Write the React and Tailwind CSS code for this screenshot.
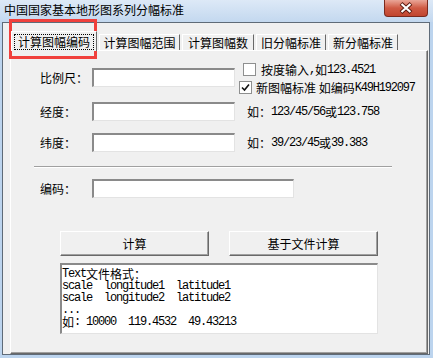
import React from 'react'

// ascii run in a SimSun-like half-width mono
function A({ children }) {
  return <span className="font-['Liberation_Mono',monospace] text-[12px] tracking-[-1.2px] leading-[12px]">{children}</span>
}

function Input({ w }) {
  return (
    <div
      className="h-[19px] bg-white border-t-2 border-l-2 border-t-[#8a8a8a] border-l-[#8a8a8a] border-r border-b border-r-[#e3e3e3] border-b-[#e3e3e3]"
      style={{ width: w }}
    />
  )
}

function CheckBox({ checked }) {
  return (
    <div className="w-[13px] h-[13px] bg-white border border-[#8e8f8f] flex items-center justify-center">
      {checked && (
        <svg width="9" height="9" viewBox="0 0 9 9">
          <path d="M1 4.5 L3.5 7 L8 1.5" fill="none" stroke="#111" strokeWidth="1.6" />
        </svg>
      )}
    </div>
  )
}

function Tab({ label, w, selected }) {
  if (selected) {
    return (
      <div className="relative z-10 -mb-[1px] h-[20px] w-[86px] bg-[#f0f0f0] border-t border-l border-white border-r border-r-[#696969] flex items-center justify-center">
        <div className="h-[16px] px-[3px] border border-dotted border-black flex items-center leading-[12px]">{label}</div>
      </div>
    )
  }
  return (
    <div
      className="h-[16px] bg-[#f0f0f0] border-t border-l border-white border-r border-r-[#696969] flex items-center justify-center leading-[12px]"
      style={{ width: w }}
    >
      {label}
    </div>
  )
}

function Button({ children }) {
  return (
    <div className="w-[149px] h-[25px] bg-[#f0f0f0] border-t border-l border-white border-r border-b border-r-[#696969] border-b-[#696969] shadow-[inset_-1px_-1px_0_#a0a0a0] flex items-center justify-center leading-[12px]">
      {children}
    </div>
  )
}

function Line({ children }) {
  return <div className="flex items-center h-[12px] leading-[12px] whitespace-pre">{children}</div>
}

export default function App() {
  return (
    <div className="relative w-[433px] h-[358px] overflow-hidden bg-[#bcd4ee] flex flex-col text-[12px] text-black font-['Noto_Sans_CJK_SC',sans-serif]">
      {/* title bar */}
      <div className="h-[22px] flex items-start bg-gradient-to-b from-[#dde9f7] to-[#c3d8ef]">
        <div className="pl-[4px] pt-[4px] leading-[12px]">中国国家基本地形图系列分幅标准</div>
        <div className="ml-auto mr-[5px] w-[44px] h-[17px] rounded-b-[4px] border border-t-0 border-[#7a2a1e] bg-gradient-to-b from-[#e9a597] via-[#cf5a44] to-[#c1452f] flex items-center justify-center">
          <svg width="14" height="12" viewBox="0 0 14 12">
            <path d="M2 1.5 L12 10.5 M12 1.5 L2 10.5" stroke="#5a1a10" strokeWidth="4" />
            <path d="M2.5 2 L11.5 10 M11.5 2 L2.5 10" stroke="#fff" strokeWidth="2.2" />
          </svg>
        </div>
      </div>

      {/* client */}
      <div className="flex-1 ml-[2px] mr-[3px] mb-[3px] border border-[#5f6b78] bg-[#f0f0f0] flex flex-col pt-[8px]">
        <div className="flex items-end gap-[2px] pl-[8px] h-[19px]">
          <Tab label="计算图幅编码" selected />
          <Tab label="计算图幅范围" w={81} />
          <Tab label="计算图幅数" w={72} />
          <Tab label="旧分幅标准" w={70} />
          <Tab label="新分幅标准" w={70} />
        </div>

        <div className="flex-1 ml-[7px] mr-[1px] border-t border-l border-white border-r border-b border-r-[#696969] border-b-[#696969] shadow-[inset_-1px_-1px_0_#a0a0a0] flex flex-col pt-[12px]">
          {/* row A */}
          <div className="flex items-start h-[31px] pl-[29px]">
            <div className="flex items-center mt-[5px]">
              <div className="w-[52px] leading-[12px]">比例尺：</div>
              <Input w={143} />
            </div>
            <div className="flex flex-col ml-[4px]">
              <div className="flex items-center h-[13px] pl-[4px] gap-[5px]">
                <CheckBox />
                <Line>按度输入<A>,</A>如<A>123.4521</A></Line>
              </div>
              <div className="flex items-center h-[13px] mt-[5px] gap-[4px]">
                <CheckBox checked />
                <Line>新图幅标准 如编码<A>K49H192097</A></Line>
              </div>
            </div>
          </div>

          {/* row B */}
          <div className="flex items-center h-[19px] mt-[8px] pl-[29px]">
            <div className="w-[52px] leading-[12px]">经度：</div>
            <Input w={143} />
            <div className="ml-[12px]">
              <Line>如：<A>123/45/56</A>或<A>123.758</A></Line>
            </div>
          </div>

          {/* row C */}
          <div className="flex items-center h-[19px] mt-[12px] pl-[29px]">
            <div className="w-[52px] leading-[12px]">纬度：</div>
            <Input w={143} />
            <div className="ml-[12px]">
              <Line>如：<A>39/23/45</A>或<A>39.383</A></Line>
            </div>
          </div>

          <div className="mt-[14px] ml-[23px] w-[358px] h-[1px] bg-[#a0a0a0]" />
          <div className="ml-[23px] w-[358px] h-[1px] bg-white" />

          {/* row D */}
          <div className="flex items-center h-[19px] mt-[11px] pl-[29px]">
            <div className="w-[52px] leading-[12px]">编码：</div>
            <Input w={202} />
          </div>

          <div className="flex gap-[20px] mt-[33px] ml-[49px]">
            <Button>计算</Button>
            <Button>基于文件计算</Button>
          </div>

          <div className="mt-[7px] ml-[49px] w-[318px] h-[71px] bg-white border-t-2 border-l-2 border-t-[#8a8a8a] border-l-[#8a8a8a] border-r border-b border-r-[#e3e3e3] border-b-[#e3e3e3] pt-[3px] flex flex-col">
            <Line><A>Text</A>文件格式：</Line>
            <Line><A>scale  longitude1  latitude1</A></Line>
            <Line><A>scale  longitude2  latitude2</A></Line>
            <Line><A>...</A></Line>
            <Line>如<A>: 10000  119.4532  49.43213</A></Line>
          </div>
        </div>
      </div>

      {/* red highlight */}
      <div className="absolute left-[9px] top-[19px] w-[88px] h-[40px] border-[3px] border-[#f0403c]" />
    </div>
  )
}
